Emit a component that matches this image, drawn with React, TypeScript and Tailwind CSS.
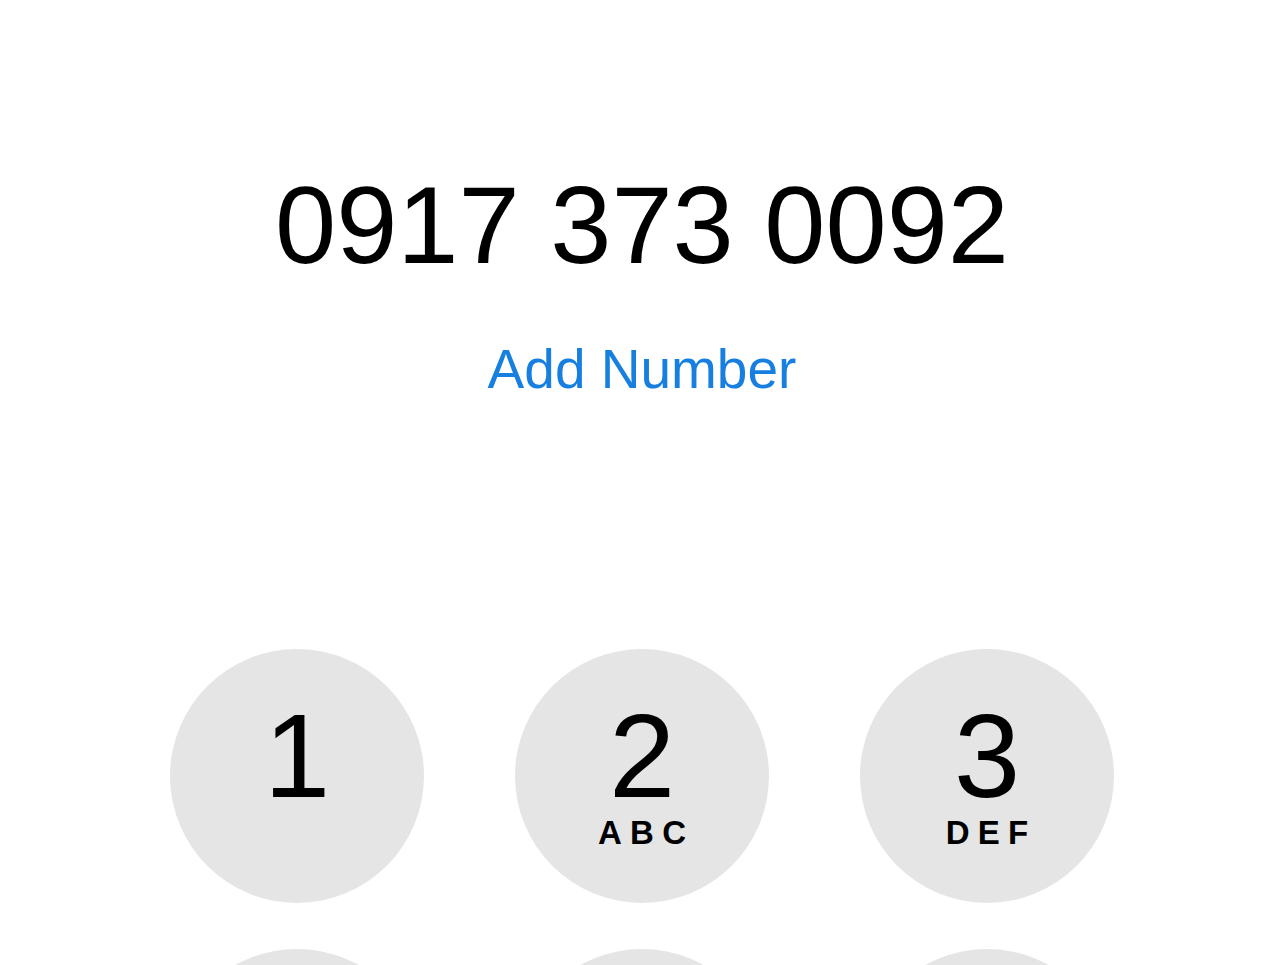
import React from 'react';

const keys: { digit: string; letters?: string }[] = [
  { digit: '1' },
  { digit: '2', letters: 'ABC' },
  { digit: '3', letters: 'DEF' },
  { digit: '4', letters: 'GHI' },
  { digit: '5', letters: 'JKL' },
  { digit: '6', letters: 'MNO' },
  { digit: '7', letters: 'PQRS' },
  { digit: '8', letters: 'TUV' },
  { digit: '9', letters: 'WXYZ' },
];

function Key({ digit, letters }: { digit: string; letters?: string }) {
  return (
    <button className="w-[254px] h-[254px] rounded-full bg-[#e5e5e6] flex flex-col items-center pt-[47px] text-black">
      <span className="text-[119px] leading-none">{digit}</span>
      {letters && (
        <span className="text-[33px] leading-none font-bold tracking-[0.25em] pl-[0.25em] mt-px">{letters}</span>
      )}
    </button>
  );
}

export default function App() {
  return (
    <div className="h-[965px] overflow-hidden bg-white flex flex-col items-center font-['Liberation_Sans',Arial,sans-serif]">
      <div className="mt-[170px] text-[110px] leading-none text-black">0917 373 0092</div>
      <button className="mt-[62px] text-[55px] leading-none text-[#167fe0]">Add Number</button>

      <div className="mt-[252px] grid grid-cols-3 gap-x-[91px] gap-y-[46px]">
        {keys.map((k) => (
          <Key key={k.digit} digit={k.digit} letters={k.letters} />
        ))}
      </div>
    </div>
  );
}
